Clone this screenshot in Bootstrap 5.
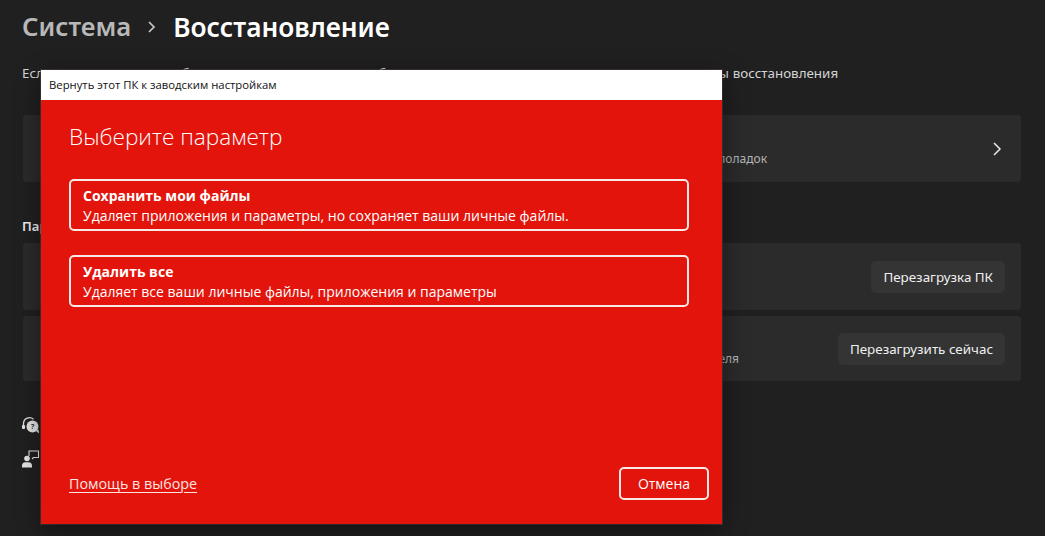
<!DOCTYPE html>
<html lang="ru">
<head>
<meta charset="utf-8">
<link href="https://cdn.jsdelivr.net/npm/bootstrap@5.3.0/dist/css/bootstrap.min.css" rel="stylesheet">
<style>
html,body{height:100%}
body{background:#202020;color:#e6e6e6;font-family:"Noto Sans","Open Sans",sans-serif;overflow:hidden;position:relative}
.settings-page{padding:9px 24px 0 22px;height:536px}
.crumbs{height:36px;font-weight:600;line-height:36px;gap:16px}
.crumb-parent{color:#b8b8b8;font-size:25.7px}
.crumb-current{color:#fff;font-size:26.3px}
.intro{font-size:13.4px;margin:19px 0 0;line-height:18px;color:#d4d4d4;white-space:nowrap;word-spacing:.3px}
.tile{background:#2b2b2b;border-radius:4px;margin-left:1px;padding:0 16px}
.tile-tall{height:67px;margin-top:33px}
.tile-sm{height:67px}
.tile-sm2{height:65px;margin-top:6px}
.tile-note{font-size:12px;color:#b5b5b5;white-space:nowrap;line-height:16px;text-align:right;margin-top:21px}
.note-a{width:728px}
.note-b{width:700px}
.chev{margin-right:2px}
.section-title{font-size:13px;font-weight:600;color:#eee;margin:35px 0 8px;line-height:18px}
.ghost-btn{background:#343434;color:#f0f0f0;border:0;border-radius:5px;font-size:13.4px;height:32px;padding:0 12px;line-height:32px}
.ghost-btn:hover{background:#343434;color:#f0f0f0}
.side-links{margin-top:35px;gap:16px}
.side-links svg{display:block}
.reset-dialog{position:absolute;left:41px;top:70px;width:681px;height:454px;background:#e3140b;box-shadow:0 6px 24px rgba(0,0,0,.45),0 0 0 1px rgba(90,70,70,.6);font-family:"Open Sans","Noto Sans",sans-serif;color:#fff}
.dialog-bar{height:30px;background:#fff;color:#111;font-size:11.3px;line-height:30px;padding-left:8px}
.dialog-body{padding:19px 33px 0 28px;height:424px}
.dialog-head{font-size:22.6px;font-weight:300;line-height:36px;margin:0 0 24px}
.choice{display:block;width:620px;height:52px;border:2px solid #f8e8e6;border-radius:5px;padding:4px 12px 3px;margin-bottom:24px;background:transparent;color:#fff;text-align:left;line-height:20px;font-size:14px}
.choice b{display:block;font-weight:700}
.dialog-foot{position:absolute;left:28px;right:13px;bottom:24px}
.help-link{color:#fbe4e2;font-size:14.3px;text-decoration-thickness:1px;text-underline-offset:3px}
.cancel-btn{width:90px;height:33px;border:2px solid #f8e8e6;border-radius:5px;background:transparent;color:#fff;font-size:14px;padding:0;line-height:28px}
.cancel-btn:hover{color:#fff;background:transparent;border-color:#f8e8e6}
</style>
</head>
<body>
<div class="settings-page">
  <div class="crumbs d-flex align-items-center">
    <span class="crumb-parent">Система</span>
    <svg width="10" height="14" viewBox="0 0 10 14" fill="none" stroke="#c8c8c8" stroke-width="1.7"><path d="M2 2l5 5-5 5"/></svg>
    <span class="crumb-current">Восстановление</span>
  </div>
  <p class="intro">Если у вас возникли проблемы с компьютером или работает не так, как надо, могут помочь эти параметры восстановления</p>
  <div class="tile tile-tall d-flex align-items-center justify-content-between">
    <div class="tile-note note-a">Устраните проблемы без сброса этого компьютера с помощью средства устранения неполадок</div>
    <svg class="chev" width="12" height="16" viewBox="0 0 12 16" fill="none" stroke="#e8e8e8" stroke-width="1.5"><path d="M3 2l6 6-6 6"/></svg>
  </div>
  <div class="section-title">Параметры восстановления</div>
  <div class="tile tile-sm d-flex align-items-center justify-content-end">
    <button class="btn ghost-btn" type="button">Перезагрузка ПК</button>
  </div>
  <div class="tile tile-sm2 d-flex align-items-center justify-content-between">
    <div class="tile-note note-b">Перезапустите устройство, чтобы изменить параметры запуска, включая запуск с диска или USB-носителя</div>
    <button class="btn ghost-btn" type="button">Перезагрузить сейчас</button>
  </div>
  <div class="side-links d-flex flex-column">
    <svg width="18" height="18" viewBox="0 0 18 18" fill="none"><path d="M1.500 11V7.500a6 6 0 0 1 10-4.300" stroke="#e4e4e4" stroke-width="1.300"/><rect x="0" y="9" width="3" height="4" rx="1" fill="#e4e4e4"/><circle cx="10.500" cy="10.500" r="6" fill="#e4e4e4"/><path d="M14 15l3 2.500-.5-4z" fill="#e4e4e4"/><text x="10.500" y="13.200" font-size="7.500" font-weight="700" text-anchor="middle" fill="#333">?</text></svg>
    <svg width="18" height="18" viewBox="0 0 18 18" fill="none"><circle cx="5" cy="8.500" r="2.800" fill="#e6e6e6"/><path d="M0 17.500v-2.300a3.500 3.500 0 0 1 3.500-3h3a3.500 3.500 0 0 1 3.500 3v2.300z" fill="#e6e6e6"/><path d="M7 6V1h9.500v6.500H11.500l-1.500 1.500" stroke="#e6e6e6" stroke-width="1.100"/></svg>
  </div>
</div>
<div class="reset-dialog">
  <div class="dialog-bar">Вернуть этот ПК к заводским настройкам</div>
  <div class="dialog-body">
    <h1 class="dialog-head">Выберите параметр</h1>
    <button class="choice" type="button"><b>Сохранить мои файлы</b>Удаляет приложения и параметры, но сохраняет ваши личные файлы.</button>
    <button class="choice" type="button"><b>Удалить все</b>Удаляет все ваши личные файлы, приложения и параметры</button>
    <div class="dialog-foot d-flex justify-content-between align-items-center">
      <a class="help-link" href="#">Помощь в выборе</a>
      <button class="btn cancel-btn" type="button">Отмена</button>
    </div>
  </div>
</div>
<script src="https://cdn.jsdelivr.net/npm/bootstrap@5.3.0/dist/js/bootstrap.bundle.min.js"></script>
</body>
</html>
